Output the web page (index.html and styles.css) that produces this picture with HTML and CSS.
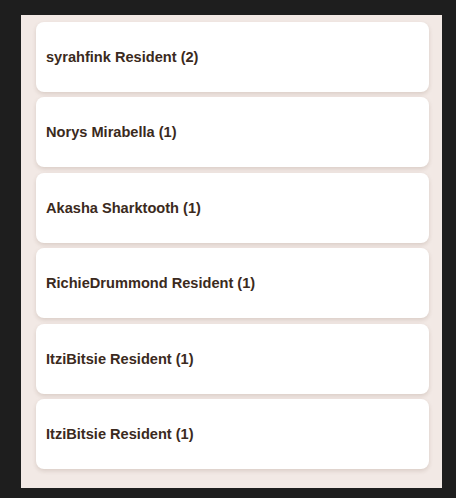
FILE: index.html
```html
<!DOCTYPE html>
<html>
<head>
<meta charset="utf-8">
<link rel="stylesheet" href="styles.css">
</head>
<body>
<div class="panel">
  <div class="card">syrahfink Resident (2)</div>
  <div class="card">Norys Mirabella (1)</div>
  <div class="card">Akasha Sharktooth (1)</div>
  <div class="card">RichieDrummond Resident (1)</div>
  <div class="card">ItziBitsie Resident (1)</div>
  <div class="card">ItziBitsie Resident (1)</div>
</div>
</body>
</html>
```
FILE: styles.css
```css
html, body {
  margin: 0;
  padding: 0;
  background: #1e1e1e;
}
body {
  padding: 15px 0 0 21px;
  width: 456px;
  height: 498px;
  box-sizing: border-box;
  overflow: hidden;
}
.panel {
  width: 421px;
  height: 473px;
  box-sizing: border-box;
  background: #f2e9e5;
  padding: 7px 13px 0 15px;
  display: flex;
  flex-direction: column;
  gap: 5.4px;
}
.card {
  height: 70px;
  flex: none;
  background: #ffffff;
  border-radius: 8px;
  box-shadow: 0 2px 4px rgba(80, 50, 30, 0.15);
  display: flex;
  align-items: center;
  padding: 0 10px;
  font-family: "Liberation Sans", Arial, sans-serif;
  font-weight: bold;
  font-size: 14.6px;
  color: #3b2a20;
}
```
